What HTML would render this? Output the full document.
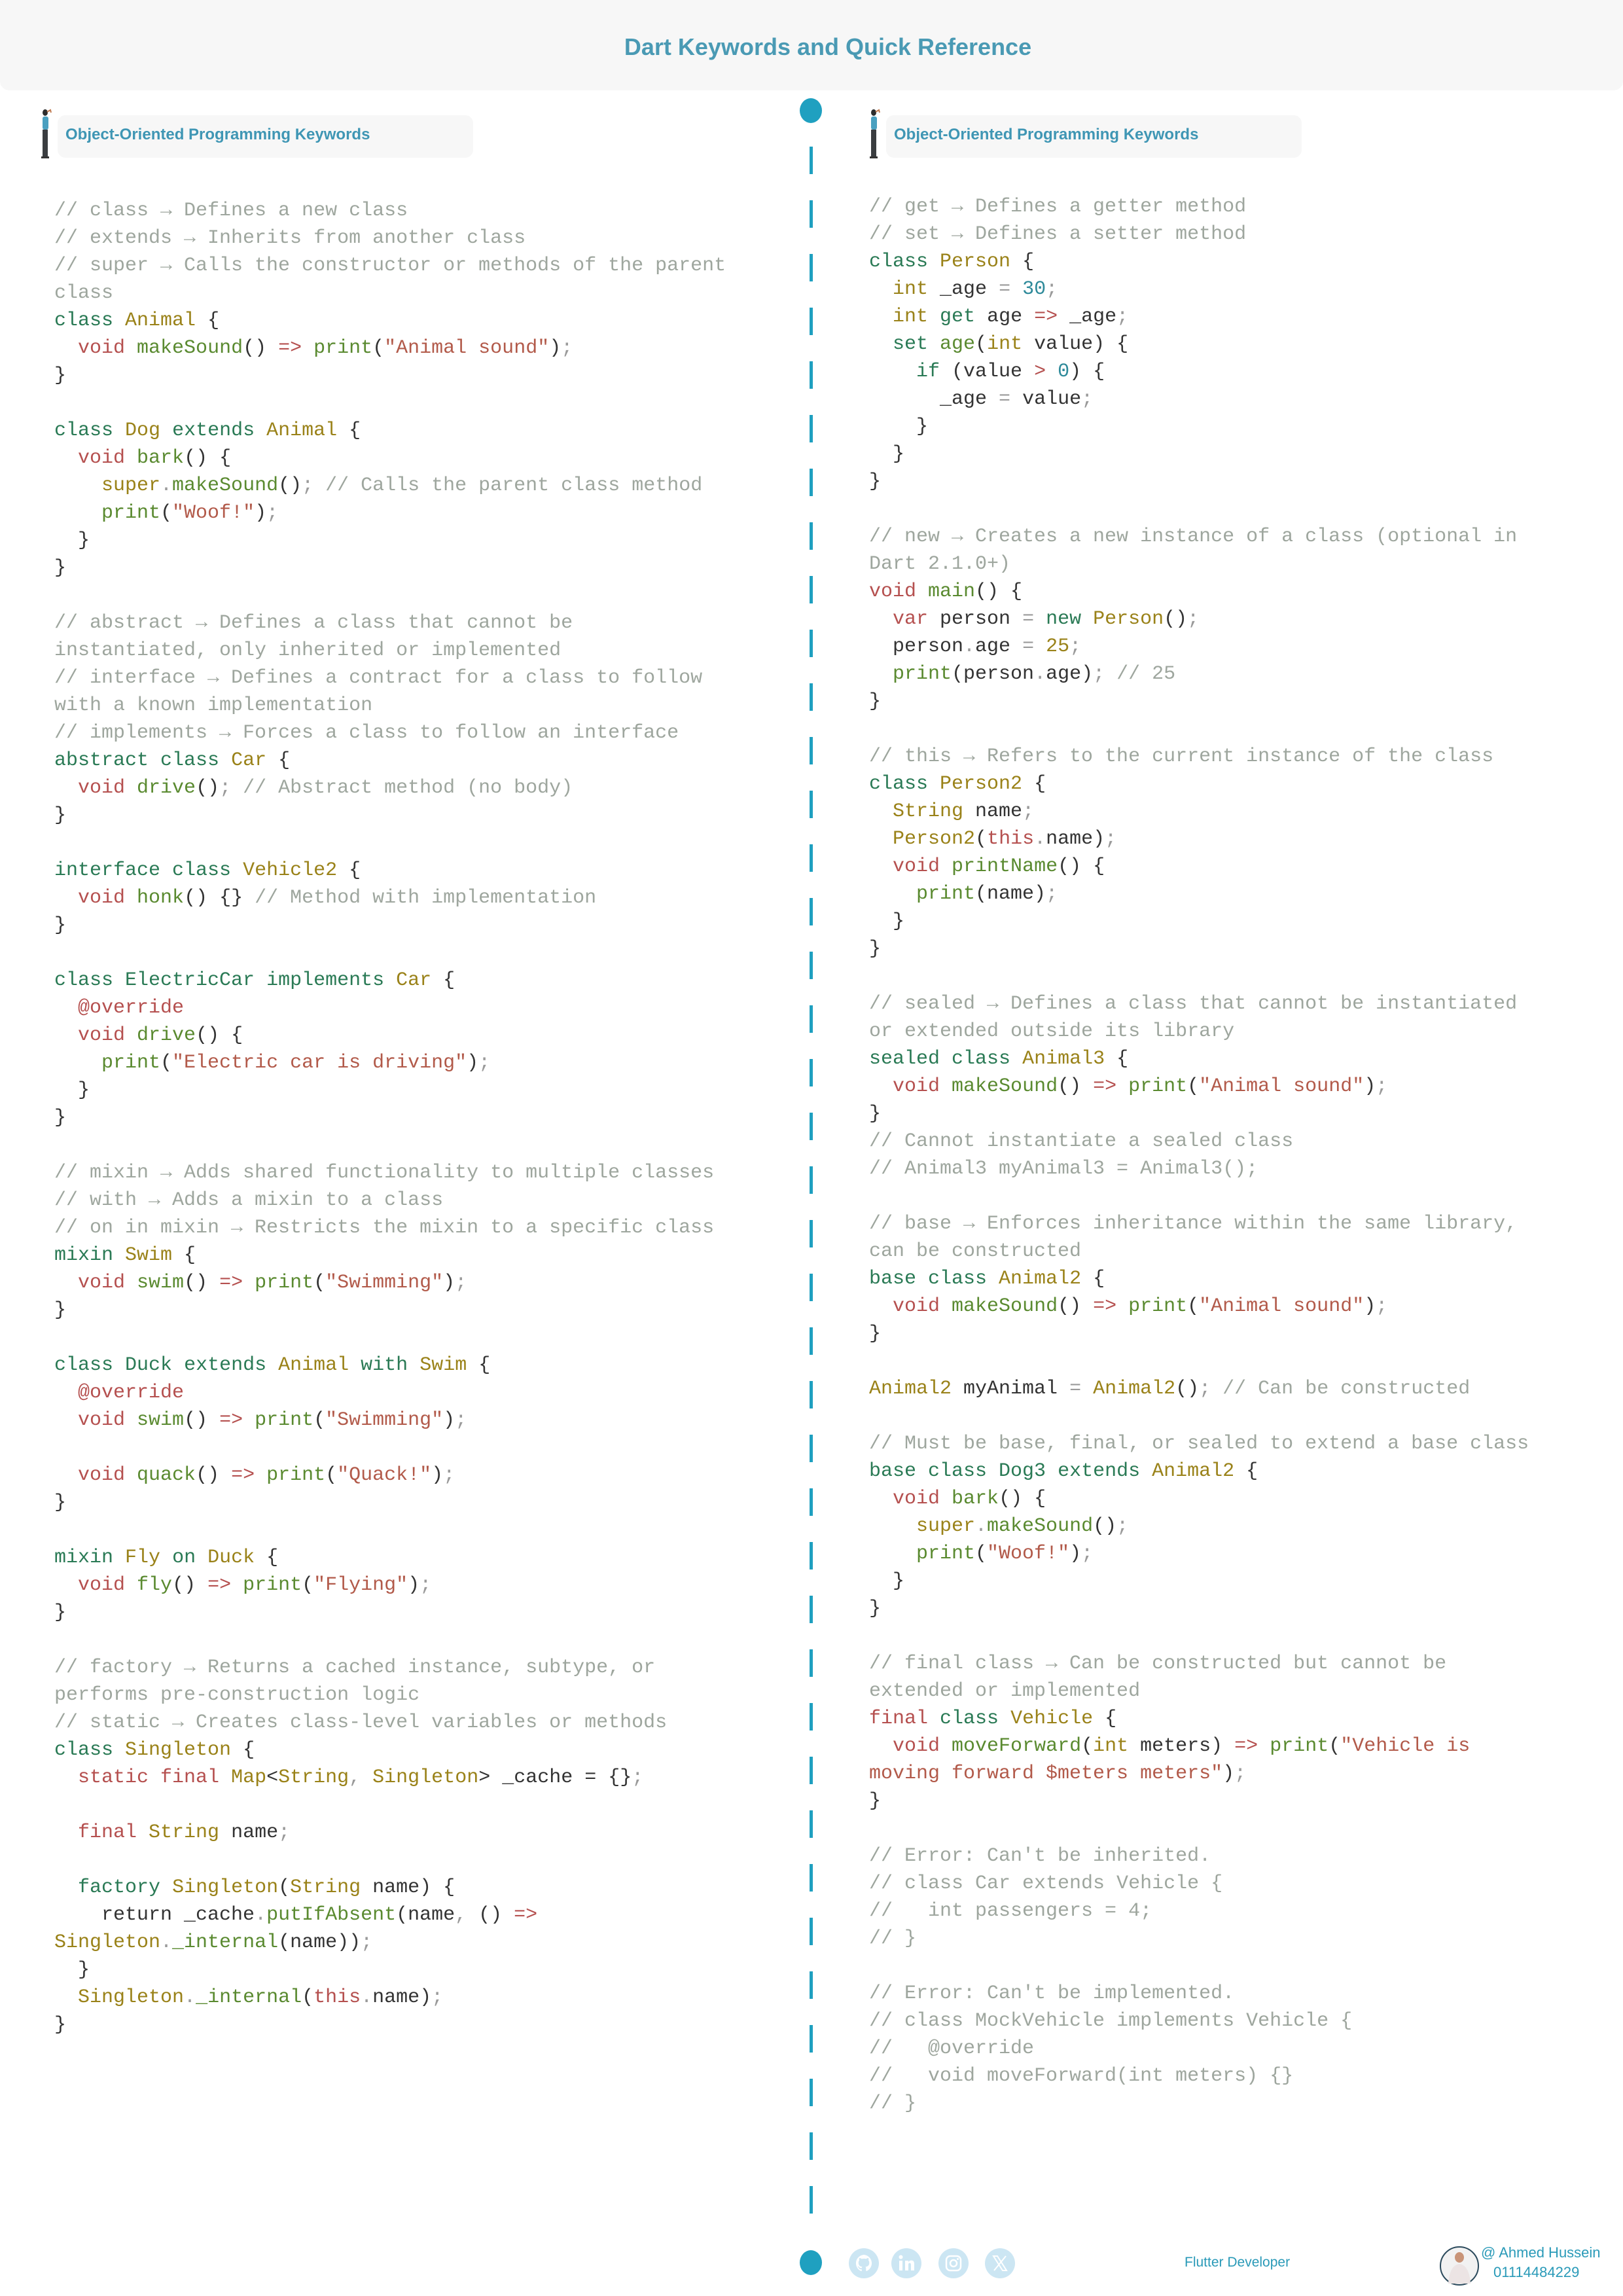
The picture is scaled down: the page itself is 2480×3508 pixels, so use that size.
<!DOCTYPE html>
<html><head><meta charset="utf-8"><style>
*{margin:0;padding:0;box-sizing:border-box}
body{width:2480px;height:3508px;position:relative;background:#fff;font-family:"Liberation Sans",sans-serif;overflow:hidden}
.hdr{position:absolute;left:0;top:0;width:2480px;height:138px;background:#f7f7f7;border-radius:0 0 14px 14px}
.title{position:absolute;left:0;width:2530px;top:51px;text-align:center;font-size:36px;font-weight:bold;color:#4a9ab4}
.sec{position:absolute;top:176px;width:635px;height:65px;background:#f7f7f7;border-radius:12px;font-size:24px;font-weight:bold;color:#3f96b4;padding:16px 0 0 12px}
.fig{position:absolute;top:166px;width:22px;height:78px}
.code{position:absolute;font-family:"Liberation Mono",monospace;font-size:30px;line-height:42px;white-space:pre;color:#333}
.c{color:#9ea69e}.k{color:#2a7a55}.t{color:#9a8219}.r{color:#b5504f}.f{color:#5a8a30}.s{color:#b25a4a}.n{color:#2e8a9a}.p{color:#9a9a9a}
.dot{position:absolute;left:1222px;width:34px;height:38px;border-radius:50%;background:#1fa0c0}
.ic{position:absolute;top:3435px;width:46px;height:46px;border-radius:50%;background:#cce6f3}
.ft{position:absolute;color:#2a9ab8;font-size:22px}
</style></head><body>
<div class="hdr"></div>
<div class="title">Dart Keywords and Quick Reference</div>

<svg class="fig" style="left:60px" viewBox="0 0 22 78"><ellipse cx="9" cy="6" rx="4" ry="5" fill="#2d2d2d"/><path d="M12 5 L17 2 L18 6" stroke="#c07a50" stroke-width="2" fill="none"/><rect x="5" y="12" width="9" height="20" rx="3" fill="#4aa0c0"/><rect x="5" y="32" width="8" height="42" fill="#3a3d40"/><rect x="3" y="73" width="12" height="3" fill="#333"/></svg>
<div class="sec" style="left:88px">Object-Oriented Programming Keywords</div>
<svg class="fig" style="left:1326px" viewBox="0 0 22 78"><ellipse cx="9" cy="6" rx="4" ry="5" fill="#2d2d2d"/><path d="M12 5 L17 2 L18 6" stroke="#c07a50" stroke-width="2" fill="none"/><rect x="5" y="12" width="9" height="20" rx="3" fill="#4aa0c0"/><rect x="5" y="32" width="8" height="42" fill="#3a3d40"/><rect x="3" y="73" width="12" height="3" fill="#333"/></svg>
<div class="sec" style="left:1354px">Object-Oriented Programming Keywords</div>

<div class="dot" style="top:150px"></div>
<svg style="position:absolute;left:1236px;top:224px" width="7" height="3160"><line x1="3.5" y1="0" x2="3.5" y2="3160" stroke="#1fa0c0" stroke-width="5" stroke-dasharray="42 40"/></svg>
<div class="dot" style="top:3438px"></div>

<div class="code" style="left:83px;top:301px"><span class="c">// class → Defines a new class
// extends → Inherits from another class
// super → Calls the constructor or methods of the parent
class</span>
<span class="k">class</span> <span class="t">Animal</span> {
  <span class="r">void</span> <span class="f">makeSound</span>() <span class="r">=&gt;</span> <span class="f">print</span>(<span class="s">"Animal sound"</span>)<span class="p">;</span>
}

<span class="k">class</span> <span class="t">Dog</span> <span class="k">extends</span> <span class="t">Animal</span> {
  <span class="r">void</span> <span class="f">bark</span>() {
    <span class="t">super</span><span class="p">.</span><span class="f">makeSound</span>()<span class="p">;</span> <span class="c">// Calls the parent class method</span>
    <span class="f">print</span>(<span class="s">"Woof!"</span>)<span class="p">;</span>
  }
}

<span class="c">// abstract → Defines a class that cannot be
instantiated, only inherited or implemented
// interface → Defines a contract for a class to follow
with a known implementation
// implements → Forces a class to follow an interface</span>
<span class="k">abstract class</span> <span class="t">Car</span> {
  <span class="r">void</span> <span class="f">drive</span>()<span class="p">;</span> <span class="c">// Abstract method (no body)</span>
}

<span class="k">interface class</span> <span class="t">Vehicle2</span> {
  <span class="r">void</span> <span class="f">honk</span>() {} <span class="c">// Method with implementation</span>
}

<span class="k">class</span> <span class="k">ElectricCar</span> <span class="k">implements</span> <span class="t">Car</span> {
  <span class="r">@override</span>
  <span class="r">void</span> <span class="f">drive</span>() {
    <span class="f">print</span>(<span class="s">"Electric car is driving"</span>)<span class="p">;</span>
  }
}

<span class="c">// mixin → Adds shared functionality to multiple classes
// with → Adds a mixin to a class
// on in mixin → Restricts the mixin to a specific class</span>
<span class="k">mixin</span> <span class="t">Swim</span> {
  <span class="r">void</span> <span class="f">swim</span>() <span class="r">=&gt;</span> <span class="f">print</span>(<span class="s">"Swimming"</span>)<span class="p">;</span>
}

<span class="k">class</span> <span class="k">Duck</span> <span class="k">extends</span> <span class="t">Animal</span> <span class="k">with</span> <span class="t">Swim</span> {
  <span class="r">@override</span>
  <span class="r">void</span> <span class="f">swim</span>() <span class="r">=&gt;</span> <span class="f">print</span>(<span class="s">"Swimming"</span>)<span class="p">;</span>

  <span class="r">void</span> <span class="f">quack</span>() <span class="r">=&gt;</span> <span class="f">print</span>(<span class="s">"Quack!"</span>)<span class="p">;</span>
}

<span class="k">mixin</span> <span class="t">Fly</span> <span class="k">on</span> <span class="t">Duck</span> {
  <span class="r">void</span> <span class="f">fly</span>() <span class="r">=&gt;</span> <span class="f">print</span>(<span class="s">"Flying"</span>)<span class="p">;</span>
}

<span class="c">// factory → Returns a cached instance, subtype, or
performs pre-construction logic
// static → Creates class-level variables or methods</span>
<span class="k">class</span> <span class="t">Singleton</span> {
  <span class="r">static final</span> <span class="t">Map</span>&lt;<span class="t">String</span><span class="p">,</span> <span class="t">Singleton</span>&gt; _cache = {}<span class="p">;</span>

  <span class="r">final</span> <span class="t">String</span> name<span class="p">;</span>

  <span class="k">factory</span> <span class="t">Singleton</span>(<span class="t">String</span> name) {
    return _cache<span class="p">.</span><span class="f">putIfAbsent</span>(name<span class="p">,</span> () <span class="r">=&gt;</span>
<span class="t">Singleton</span><span class="p">.</span><span class="f">_internal</span>(name))<span class="p">;</span>
  }
  <span class="t">Singleton</span><span class="p">.</span><span class="f">_internal</span>(<span class="r">this</span><span class="p">.</span>name)<span class="p">;</span>
}</div>

<div class="code" style="left:1328px;top:295px"><span class="c">// get → Defines a getter method
// set → Defines a setter method</span>
<span class="k">class</span> <span class="t">Person</span> {
  <span class="t">int</span> _age <span class="p">=</span> <span class="n">30</span><span class="p">;</span>
  <span class="t">int</span> <span class="k">get</span> age <span class="r">=&gt;</span> _age<span class="p">;</span>
  <span class="k">set</span> <span class="f">age</span>(<span class="t">int</span> value) {
    <span class="k">if</span> (value <span class="r">&gt;</span> <span class="n">0</span>) {
      _age <span class="p">=</span> value<span class="p">;</span>
    }
  }
}

<span class="c">// new → Creates a new instance of a class (optional in
Dart 2.1.0+)</span>
<span class="r">void</span> <span class="f">main</span>() {
  <span class="r">var</span> person <span class="p">=</span> <span class="k">new</span> <span class="t">Person</span>()<span class="p">;</span>
  person<span class="p">.</span>age <span class="p">=</span> <span class="t">25</span><span class="p">;</span>
  <span class="f">print</span>(person<span class="p">.</span>age)<span class="p">;</span> <span class="c">// 25</span>
}

<span class="c">// this → Refers to the current instance of the class</span>
<span class="k">class</span> <span class="t">Person2</span> {
  <span class="t">String</span> name<span class="p">;</span>
  <span class="t">Person2</span>(<span class="r">this</span><span class="p">.</span>name)<span class="p">;</span>
  <span class="r">void</span> <span class="f">printName</span>() {
    <span class="f">print</span>(name)<span class="p">;</span>
  }
}

<span class="c">// sealed → Defines a class that cannot be instantiated
or extended outside its library</span>
<span class="k">sealed class</span> <span class="t">Animal3</span> {
  <span class="r">void</span> <span class="f">makeSound</span>() <span class="r">=&gt;</span> <span class="f">print</span>(<span class="s">"Animal sound"</span>)<span class="p">;</span>
}
<span class="c">// Cannot instantiate a sealed class
// Animal3 myAnimal3 = Animal3();

// base → Enforces inheritance within the same library,
can be constructed</span>
<span class="k">base class</span> <span class="t">Animal2</span> {
  <span class="r">void</span> <span class="f">makeSound</span>() <span class="r">=&gt;</span> <span class="f">print</span>(<span class="s">"Animal sound"</span>)<span class="p">;</span>
}

<span class="t">Animal2</span> myAnimal <span class="p">=</span> <span class="t">Animal2</span>()<span class="p">;</span> <span class="c">// Can be constructed</span>

<span class="c">// Must be base, final, or sealed to extend a base class</span>
<span class="k">base class</span> <span class="k">Dog3</span> <span class="k">extends</span> <span class="t">Animal2</span> {
  <span class="r">void</span> <span class="f">bark</span>() {
    <span class="t">super</span><span class="p">.</span><span class="f">makeSound</span>()<span class="p">;</span>
    <span class="f">print</span>(<span class="s">"Woof!"</span>)<span class="p">;</span>
  }
}

<span class="c">// final class → Can be constructed but cannot be
extended or implemented</span>
<span class="r">final</span> <span class="k">class</span> <span class="t">Vehicle</span> {
  <span class="r">void</span> <span class="f">moveForward</span>(<span class="t">int</span> meters) <span class="r">=&gt;</span> <span class="f">print</span>(<span class="s">"Vehicle is
moving forward $meters meters"</span>)<span class="p">;</span>
}

<span class="c">// Error: Can't be inherited.
// class Car extends Vehicle {
//   int passengers = 4;
// }

// Error: Can't be implemented.
// class MockVehicle implements Vehicle {
//   @override
//   void moveForward(int meters) {}
// }</span></div>

<div class="ic" style="left:1297px"><svg width="46" height="46" viewBox="0 0 46 46"><path d="M23 10a13 13 0 0 0-4 25c.6.1.8-.3.8-.6v-2.3c-3.6.8-4.4-1.7-4.4-1.7-.6-1.5-1.4-1.9-1.4-1.9-1.2-.8.1-.8.1-.8 1.3.1 2 1.3 2 1.3 1.2 2 3 1.4 3.8 1.1.1-.8.4-1.4.8-1.700-2.9-.3-5.9-1.4-5.9-6.4 0-1.4.5-2.6 1.3-3.5-.1-.3-.6-1.7.1-3.5 0 0 1.1-.3 3.6 1.3a12.4 12.4 0 0 1 6.5 0c2.5-1.7 3.6-1.3 3.6-1.300.7 1.8.3 3.1.1 3.5.8.9 1.3 2.1 1.3 3.5 0 5-3 6.1-5.9 6.4.5.4.9 1.2.9 2.4v3.5c0 .3.2.7.9.6A13 13 0 0 0 23 10z" fill="#fff"/></svg></div>
<div class="ic" style="left:1362px"><svg width="46" height="46" viewBox="0 0 46 46"><rect x="12" y="19" width="5" height="15" fill="#fff"/><circle cx="14.5" cy="13.5" r="3" fill="#fff"/><path d="M21 19h5v2c1-1.6 2.6-2.4 4.6-2.4 3.6 0 4.4 2.4 4.4 5.6V34h-5v-8.5c0-1.7-.3-2.9-2-2.9s-2 1.3-2 2.9V34h-5z" fill="#fff"/></svg></div>
<div class="ic" style="left:1434px"><svg width="46" height="46" viewBox="0 0 46 46"><rect x="12" y="12" width="22" height="22" rx="6" fill="none" stroke="#fff" stroke-width="2.5"/><circle cx="23" cy="23" r="5" fill="none" stroke="#fff" stroke-width="2.5"/><circle cx="29.5" cy="16.5" r="1.5" fill="#fff"/></svg></div>
<div class="ic" style="left:1505px"><svg width="46" height="46" viewBox="0 0 46 46"><path d="M13 12h6l14 22h-6zM32 12L14 34" stroke="#fff" stroke-width="2" fill="none"/></svg></div>

<div class="ft" style="left:1810px;top:3445px;font-size:21px">Flutter Developer</div>
<svg style="position:absolute;left:2199px;top:3431px" width="62" height="62"><circle cx="31" cy="31" r="29" fill="#f2f2f2" stroke="#2b4a5c" stroke-width="2"/><ellipse cx="31" cy="18" rx="7" ry="8" fill="#c99478"/><path d="M14 58 Q16 30 31 28 Q46 30 48 58z" fill="#ece4e4"/></svg>
<div class="ft" style="left:2263px;top:3429px">@ Ahmed Hussein</div>
<div class="ft" style="left:2282px;top:3459px">01114484229</div>
</body></html>
